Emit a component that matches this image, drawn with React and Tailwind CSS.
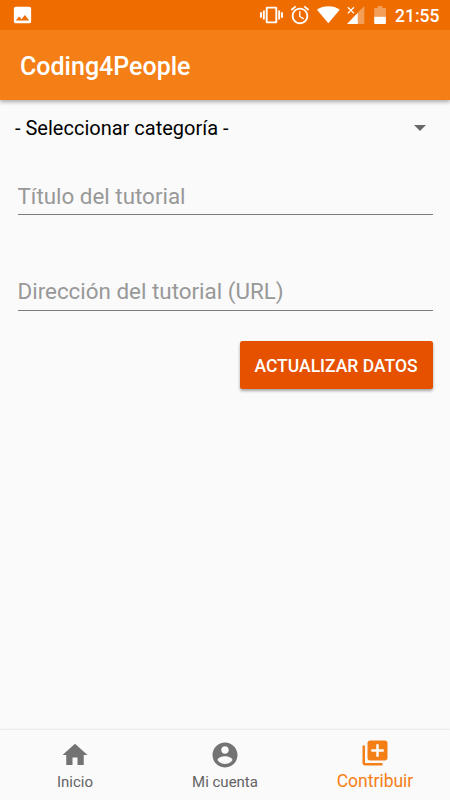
import React from "react";

function StatusBar() {
  return (
    <div className="flex h-[30px] items-center bg-[#ef6c00] text-white">
      <svg className="ml-[11px] h-[22px] w-[23px]" viewBox="0 0 24 24" preserveAspectRatio="none" fill="currentColor">
        <path d="M21 19V5c0-1.1-.9-2-2-2H5c-1.1 0-2 .9-2 2v14c0 1.1.9 2 2 2h14c1.1 0 2-.9 2-2zM8.5 13.5l2.5 3.01L14.500 12l4.500 6H5l3.500-4.500z" />
      </svg>
      <svg className="ml-auto h-[22px] w-[23px]" viewBox="0 0 24 24" preserveAspectRatio="none" fill="currentColor">
        <path d="M0 15h2V9H0v6zm3 2h2V7H3v10zm19-8v6h2V9h-2zm-3 8h2V7h-2v10zM16.500 3h-9C6.670 3 6 3.670 6 4.500v15c0 .83.670 1.500 1.500 1.500h9c.83 0 1.500-.67 1.500-1.500v-15c0-.83-.67-1.500-1.500-1.500zM16 19H8V5h8v14z" />
      </svg>
      <svg className="ml-1.5 h-[22px] w-[22px]" viewBox="0 0 24 24" fill="currentColor">
        <path d="M22 5.720l-4.600-3.860-1.290 1.530 4.600 3.860L22 5.720zM7.880 3.390L6.600 1.860 2 5.710l1.290 1.530 4.590-3.850zM12.500 8H11v6l4.750 2.850.75-1.230-4-2.370V8zM12 4c-4.970 0-9 4.030-9 9s4.020 9 9 9c4.970 0 9-4.030 9-9s-4.030-9-9-9zm0 16c-3.870 0-7-3.130-7-7s3.130-7 7-7 7 3.130 7 7-3.130 7-7 7z" />
      </svg>
      <svg className="ml-1.5 h-[30px] w-[23px]" viewBox="0 0 23 30" fill="currentColor">
        <path d="M0 9.700C6 5.200 17 5.200 22.700 9.700L11.350 23.300Z" />
      </svg>
      <svg className="ml-[7px] h-[30px] w-[18px]" viewBox="0 0 18 30" fill="currentColor">
        <path d="M17.300 6V24H10.800V12.500Z" opacity=".35" />
        <path d="M0 24L10.800 12.800V24Z" />
        <path d="M.8 7.200L7 13.400M7 7.200L.8 13.400" stroke="currentColor" strokeWidth="1.300" />
      </svg>
      <svg className="ml-[9px] h-[30px] w-[12px]" viewBox="0 0 12 30" fill="currentColor">
        <path d="M.2 16.700V9Q.2 8 1.200 8H3.700V6H8.300V8H10.900Q11.900 8 11.900 9V16.700Z" opacity=".35" />
        <path d="M.2 16.700H11.900V23Q11.900 24 10.900 24H1.200Q.2 24 .2 23Z" />
      </svg>
      <span className="ml-[9px] mr-2.5 w-[45px] whitespace-nowrap pt-0.5 text-[17.500px] font-medium leading-7">21:55</span>
    </div>
  );
}

function Field({ label, leading }) {
  return (
    <div className={`flex h-[39px] items-start border-b border-[#7d7d7d] text-[22.400px] text-[#989898] ${leading}`}>
      {label}
    </div>
  );
}

function NavItem({ label, path, active }) {
  return (
    <div className={active ? "flex flex-1 flex-col items-center pt-[7.500px] text-[#f57f17]" : "flex flex-1 flex-col items-center pt-[9.500px] text-[#737373]"}>
      <svg className="h-[30px] w-[30px]" viewBox="0 0 24 24" fill="currentColor">
        <path d={path} />
      </svg>
      <span className={active ? "mt-px text-[17.500px] leading-6" : "mt-0.5 text-[15px] leading-[21px] text-[#636363]"}>{label}</span>
    </div>
  );
}

export default function App() {
  return (
    <div className="flex h-[800px] w-[450px] flex-col overflow-hidden bg-[#fafafa] font-['Roboto','Liberation_Sans',sans-serif]">
      <header className="shadow-[0_2px_4px_rgba(0,0,0,0.32)]">
        <StatusBar />
        <div className="flex h-[70px] items-center bg-[#f57f17] px-5 pt-1 text-[25px] font-medium text-white">
          Coding4People
        </div>
      </header>
      <main className="flex flex-1 flex-col">
        <div className="flex h-[56px] items-center justify-between pl-[15px] pr-6 text-[20px] text-black">
          <span>- Seleccionar categoría -</span>
          <svg className="h-1.5 w-3" viewBox="0 0 12 6" fill="#696969">
            <path d="M0 0H12L6 6Z" />
          </svg>
        </div>
        <div className="mx-[17.500px] mt-5 flex flex-col gap-[57px]">
          <Field label="Título del tutorial" leading="leading-[40px]" />
          <Field label="Dirección del tutorial (URL)" leading="leading-[39px]" />
        </div>
        <button className="mr-[17.500px] mt-[30px] h-[48px] w-[193px] self-end whitespace-nowrap rounded-[2.500px] bg-[#e65100] pt-0.5 text-[17.500px] font-medium text-white shadow-[0_2px_3px_rgba(0,0,0,0.35)]">
          ACTUALIZAR DATOS
        </button>
      </main>
      <nav className="flex h-[70px] shadow-[0_-1px_2px_rgba(0,0,0,0.08)]">
        <NavItem label="Inicio" path="M10 20v-6h4v6h5v-8h3L12 3 2 12h3v8z" />
        <NavItem label="Mi cuenta" path="M12 2C6.480 2 2 6.480 2 12s4.480 10 10 10 10-4.480 10-10S17.520 2 12 2zm0 3c1.660 0 3 1.340 3 3s-1.340 3-3 3-3-1.340-3-3 1.340-3 3-3zm0 14.200c-2.500 0-4.710-1.280-6-3.220.03-1.990 4-3.080 6-3.080 1.990 0 5.970 1.090 6 3.080-1.290 1.940-3.500 3.220-6 3.220z" />
        <NavItem active label="Contribuir" path="M4 6H2v14c0 1.100.9 2 2 2h14v-2H4V6zm16-4H8c-1.100 0-2 .9-2 2v12c0 1.100.9 2 2 2h12c1.100 0 2-.9 2-2V4c0-1.100-.9-2-2-2zm-1 9h-4v4h-2v-4H9V9h4V5h2v4h4v2z" />
      </nav>
    </div>
  );
}
